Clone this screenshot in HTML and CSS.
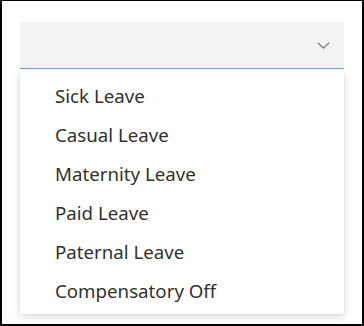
FILE: index.html
```html
<!DOCTYPE html>
<html lang="en">
<head>
  <meta charset="UTF-8">
  <title>Leave Type</title>
  <link rel="stylesheet" href="styles.css">
</head>
<body>
  <div class="frame">
    <div class="select">
      <span class="select-value"></span>
      <svg class="chevron" width="13" height="7" viewBox="0 0 13 7">
        <path d="M0.8 0.8 L6.5 6.2 L12.2 0.8" fill="none" stroke="#7a7a7a" stroke-width="1.2"/>
      </svg>
    </div>
    <ul class="dropdown">
      <li class="option">Sick Leave</li>
      <li class="option">Casual Leave</li>
      <li class="option">Maternity Leave</li>
      <li class="option">Paid Leave</li>
      <li class="option">Paternal Leave</li>
      <li class="option">Compensatory Off</li>
    </ul>
  </div>
</body>
</html>
```

FILE: styles.css
```css
html, body {
  margin: 0;
  padding: 0;
}
body {
  font-family: 'Noto Sans', 'Open Sans', Arial, sans-serif;
  color: #323130;
  background: white;
}
.frame {
  width: 364px;
  height: 326px;
  box-sizing: border-box;
  border: 2px solid #000;
  border-top-width: 1px;
  padding: 21px 18px 0 18px;
}
.select {
  height: 46px;
  background: #f3f3f3;
  border-bottom: 1px solid #7ea8da;
  display: flex;
  align-items: center;
  justify-content: flex-end;
  padding-right: 14px;
}
.chevron {
  display: block;
  margin-top: 1px;
}
.dropdown {
  list-style: none;
  margin: 1px 0 0 0;
  padding: 6px 0 4px 0;
  background: white;
  border-radius: 2px;
  box-shadow: 0 3px 8px rgba(0,0,0,0.14), 0 0 2px rgba(0,0,0,0.1);
}
.option {
  height: 39px;
  line-height: 39px;
  padding-left: 35px;
  font-size: 18.7px;
}
```
